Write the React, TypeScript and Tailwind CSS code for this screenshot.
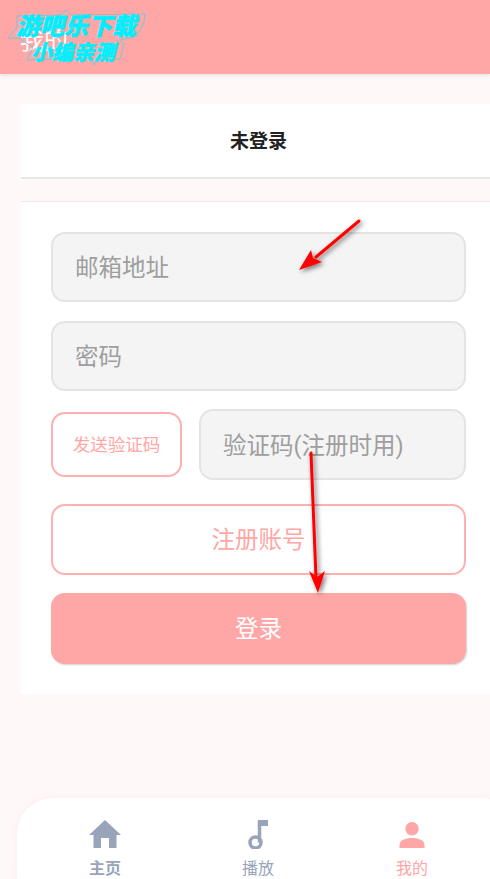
const fieldClass =
  'flex items-center rounded-[14px] border-2 border-[#e4e4e4] bg-[#f4f4f4] pl-[22px] pt-[4px] text-[23.5px] text-[#9e9e9e]'

function Logo() {
  return (
    <div className="absolute left-[12px] top-[14px] w-[128px] text-center font-black italic text-[#00f0ff]">
      <div className="h-[27px] text-[24px] leading-[27px] whitespace-nowrap [-webkit-text-stroke:0.5px_#00f0ff]">游吧乐下载</div>
      <div className="h-[24px] pr-[6px] text-[21px] leading-[24px] whitespace-nowrap [-webkit-text-stroke:0.5px_#00f0ff]">小编亲测</div>
    </div>
  )
}

function LogoOutline() {
  return (
    <svg className="absolute left-0 top-0" width="160" height="74" viewBox="0 0 160 74" fill="none">
      <path
        d="M8 38 L17 27 L17 16 L60 15 L66 10 L72 15 L145 14 L144 22 L137 36 L120 40 L124 43 L120 59 L97 59 L94 65 L91 58 L27 60 L33 47 L18 38 Z"
        stroke="#7fc4d2"
        strokeWidth="1"
      />
    </svg>
  )
}

function Arrows() {
  return (
    <svg className="absolute left-0 top-0" width="490" height="879" viewBox="0 0 490 879" fill="none">
      <defs>
        <filter id="arrowShadow" x="-50%" y="-50%" width="200%" height="200%">
          <feDropShadow dx="2" dy="2" stdDeviation="2.5" floodColor="#000" floodOpacity="0.55" />
        </filter>
      </defs>
      <g filter="url(#arrowShadow)">
        <path d="M359 221 L316 257" stroke="#ff0000" strokeWidth="3" strokeLinecap="round" />
        <path d="M299 270 L311 250 L313 258 L322 262 Z" fill="#ff0000" />
        <path d="M311 453 L316 578" stroke="#ff0000" strokeWidth="3" strokeLinecap="round" />
        <path d="M318 593 L309 571 L317 577 L325 571 Z" fill="#ff0000" />
      </g>
    </svg>
  )
}

export default function App() {
  return (
    <div className="relative flex h-[879px] w-[490px] flex-col overflow-hidden bg-[#fff8f8] font-['Roboto','Noto_Sans_CJK_SC',sans-serif]">
      {/* Header */}
      <div className="relative h-[74px] shrink-0 bg-[#ffa6a6] shadow-[0_1px_4px_rgba(0,0,0,0.12)]">
        <div className="absolute left-[20px] top-[29px] text-[24px] leading-[24px] text-white">我的</div>
        <LogoOutline />
        <Logo />
      </div>

      {/* Status card */}
      <div className="ml-[21px] mt-[30px] flex h-[75px] shrink-0 items-center justify-center border-b-2 border-[#e8e8e8] bg-white pt-[4px]">
        <span className="pl-[6px] text-[19px] font-bold text-[#222]">未登录</span>
      </div>

      {/* Form */}
      <div className="ml-[21px] mt-[22px] flex h-[493px] shrink-0 flex-col border-t border-[#f0e8e8] bg-white pl-[30px] pr-[24px] pt-[30px]">
        <div className={`h-[70px] ${fieldClass}`}>邮箱地址</div>
        <div className={`mt-[19px] h-[70px] ${fieldClass}`}>密码</div>
        <div className="mt-[18px] flex h-[71px] items-center gap-[17px]">
          <div className="flex h-[65px] w-[131px] shrink-0 items-center justify-center rounded-[14px] border-2 border-[#ffb0b0] pt-[2px] text-[17.5px] text-[#ffa6a6]">
            发送验证码
          </div>
          <div className={`h-[71px] flex-1 ${fieldClass}`}>验证码(注册时用)</div>
        </div>
        <div className="mt-[24px] flex h-[71px] items-center justify-center rounded-[14px] border-2 border-[#ffb0b0] pt-[2px] text-[23.5px] text-[#ffa6a6]">
          注册账号
        </div>
        <div className="mt-[18px] flex h-[71px] items-center justify-center rounded-[14px] bg-[#ffa6a6] pt-[2px] text-[23.5px] text-white shadow-[1px_1px_2px_rgba(0,0,0,0.18)]">
          登录
        </div>
      </div>

      {/* Bottom nav */}
      <div className="absolute left-[17px] top-[798px] flex h-[110px] w-[500px] rounded-[36px] bg-white shadow-[0_0_6px_rgba(255,200,200,0.25)]">
        <div className="flex w-[176px] shrink-0 flex-col items-center pt-[22px] text-[#97a4ba]">
          <svg width="32" height="28" viewBox="0 0 32 28" fill="#97a4ba">
            <path d="M16 0 L32 15 L27.5 15 L27.5 28 L20 28 L20 18 L12 18 L12 28 L4.5 28 L4.5 15 L0 15 Z" />
          </svg>
          <span className="mt-[9px] text-[16px] font-bold leading-[24px]">主页</span>
        </div>
        <div className="flex w-[130px] shrink-0 flex-col items-center pt-[22px] text-[#97a4ba]">
          <svg width="20" height="29" viewBox="0 0 20 29" fill="none">
            <path d="M11.5 1 V22.5" stroke="#97a4ba" strokeWidth="3.5" />
            <path d="M10 0 H20 V6 H10 Z" fill="#97a4ba" />
            <circle cx="7.5" cy="22.5" r="5.5" stroke="#97a4ba" strokeWidth="3.5" />
          </svg>
          <span className="mt-[8px] text-[16px] leading-[24px]">播放</span>
        </div>
        <div className="flex w-[178px] shrink-0 flex-col items-center pt-[24px] text-[#ffa6a6]">
          <svg width="26" height="26" viewBox="0 0 26 27" fill="#ffa6a6">
            <circle cx="13" cy="7" r="7" />
            <path d="M0 27 V24 C0 19 6 16.5 13 16.5 C20 16.5 26 19 26 24 V27 Z" />
          </svg>
          <span className="mt-[9px] text-[16px] leading-[24px]">我的</span>
        </div>
      </div>

      <Arrows />
    </div>
  )
}
